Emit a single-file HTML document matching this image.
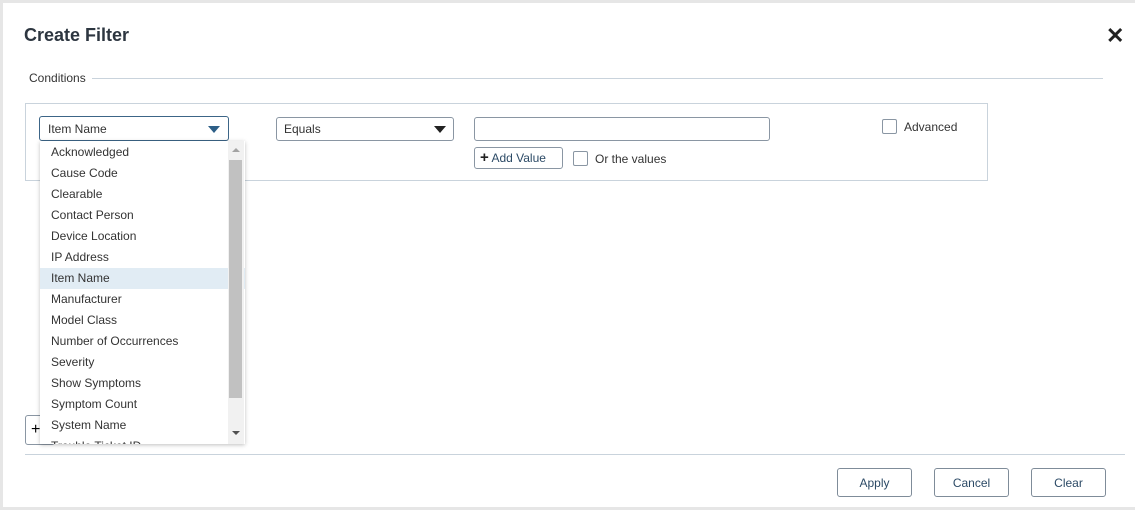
<!DOCTYPE html><html><head><style>
body{margin:0;width:1135px;height:510px;background:#e6e6e6;font-family:"Liberation Sans",sans-serif;position:relative;overflow:hidden}
.m{position:absolute;left:3px;top:3px;width:1132px;height:504px;background:#fff}
.a{position:absolute}
.t{font-size:12px;color:#333}
.box{border:1px solid #8a96a3;border-radius:3px;background:#fff;box-sizing:border-box}
.btn{position:absolute;top:468px;height:29px;width:75px;border:1px solid #7f8c99;border-radius:3px;box-sizing:border-box;font-size:12px;color:#2c4a66;text-align:center;line-height:28px}
.cb{position:absolute;width:15px;height:15px;border:1px solid #8a96a3;border-radius:2px;box-sizing:border-box}
.li{height:21px;line-height:21px;padding-left:11px;font-size:12px;color:#333}
</style></head><body><div class="m"></div>
<div class="a" style="left:24px;top:25px;font-size:18px;font-weight:bold;color:#2d3640">Create Filter</div>
<div class="a" style="left:1106px;top:23px;font-size:22px;font-weight:bold;color:#222">✕</div>
<div class="a t" style="left:29px;top:71px">Conditions</div>
<div class="a" style="left:92px;top:78px;width:1011px;height:1px;background:#c9d3dc"></div>
<div class="a" style="left:25px;top:103px;width:963px;height:78px;border:1px solid #c9d3dc;box-sizing:border-box"></div>
<div class="a box t" style="left:39px;top:116px;width:190px;height:25px;border-color:#3c6587;line-height:24px;padding-left:8px">Item Name</div>
<div class="a" style="left:208px;top:126px;border-left:6px solid transparent;border-right:6px solid transparent;border-top:7px solid #2d5f87"></div>
<div class="a box t" style="left:276px;top:117px;width:178px;height:24px;line-height:23px;padding-left:7px">Equals</div>
<div class="a" style="left:434px;top:126px;border-left:6px solid transparent;border-right:6px solid transparent;border-top:7px solid #222"></div>
<div class="a box" style="left:474px;top:117px;width:296px;height:24px"></div>
<div class="a box" style="left:474px;top:147px;width:89px;height:22px;font-size:12px;color:#2c4a66;line-height:20px;padding-left:5px"><b style="font-size:15px;color:#222">+</b> Add Value</div>
<div class="cb" style="left:573px;top:151px"></div><div class="a t" style="left:595px;top:152px">Or the values</div>
<div class="cb" style="left:882px;top:119px"></div><div class="a t" style="left:904px;top:120px">Advanced</div>
<div class="a box" style="left:25px;top:415px;width:30px;height:30px;font-size:16px;padding-left:5px;line-height:28px">+</div>
<div class="a" style="left:40px;top:141px;width:205px;height:303px;background:#fff;box-shadow:0 1px 4px rgba(0,0,0,.25);overflow:hidden">
<div style="padding-top:1px">
<div class="li">Acknowledged</div><div class="li">Cause Code</div><div class="li">Clearable</div><div class="li">Contact Person</div><div class="li">Device Location</div><div class="li">IP Address</div><div class="li" style="background:#e1ecf4">Item Name</div><div class="li">Manufacturer</div><div class="li">Model Class</div><div class="li">Number of Occurrences</div><div class="li">Severity</div><div class="li">Show Symptoms</div><div class="li">Symptom Count</div><div class="li">System Name</div><div class="li">Trouble Ticket ID</div></div>
<div class="a" style="left:188px;top:0;width:16px;height:303px;background:#f1f1f1"></div>
<div class="a" style="left:189px;top:19px;width:13px;height:238px;background:#c1c1c1"></div>
<div class="a" style="left:192px;top:7px;border-left:4px solid transparent;border-right:4px solid transparent;border-bottom:4px solid #a3a3a3"></div>
<div class="a" style="left:192px;top:290px;border-left:4px solid transparent;border-right:4px solid transparent;border-top:4px solid #505050"></div>
</div>
<div class="a" style="left:25px;top:454px;width:1100px;height:1px;background:#c9d3dc"></div>
<div class="btn" style="left:837px">Apply</div><div class="btn" style="left:934px">Cancel</div><div class="btn" style="left:1031px">Clear</div>
</body></html>
